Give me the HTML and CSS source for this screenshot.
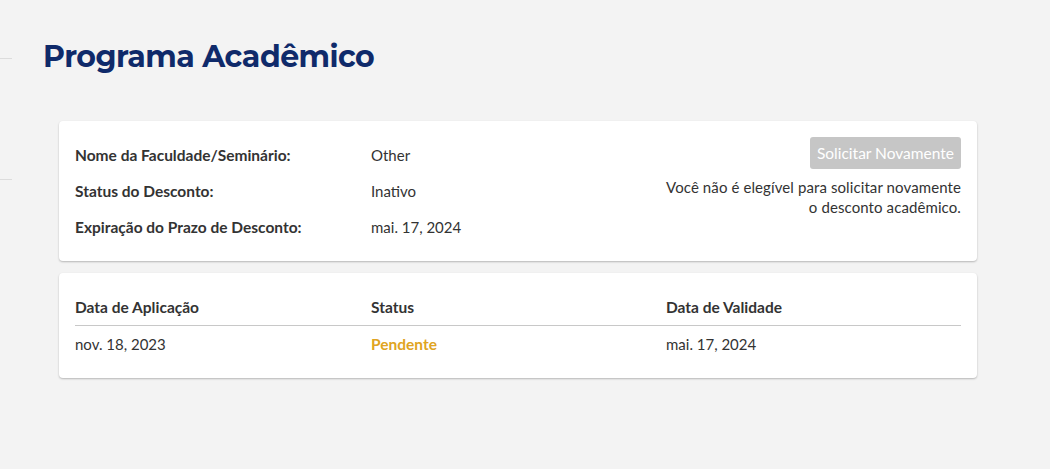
FILE: index.html
```html
<!DOCTYPE html>
<html lang="pt">
<head>
  <meta charset="UTF-8">
  <title>Programa Acadêmico</title>
  <link rel="stylesheet" href="styles.css">
</head>
<body>
  <div class="layout">
    <aside class="sidebar">
      <div class="side-item first"></div>
      <div class="side-item"></div>
    </aside>

    <main class="content">
      <h1 class="page-title">Programa Acadêmico</h1>

      <section class="card summary">
        <div class="details">
          <div class="label">Nome da Faculdade/Seminário:</div>
          <div class="value">Other</div>
          <div class="label">Status do Desconto:</div>
          <div class="value">Inativo</div>
          <div class="label">Expiração do Prazo de Desconto:</div>
          <div class="value">mai. 17, 2024</div>
        </div>
        <div class="actions">
          <button type="button" class="btn-disabled" disabled>Solicitar Novamente</button>
          <p class="note">Você não é elegível para solicitar novamente<br>o desconto acadêmico.</p>
        </div>
      </section>

      <section class="card history">
        <div class="row head">
          <div>Data de Aplicação</div>
          <div>Status</div>
          <div>Data de Validade</div>
        </div>
        <div class="row">
          <div>nov. 18, 2023</div>
          <div class="pending">Pendente</div>
          <div>mai. 17, 2024</div>
        </div>
      </section>
    </main>
  </div>
</body>
</html>
```

FILE: styles.css
```css
body {
  margin: 0;
  background-color: #f3f3f3;
  font-family: "Source Sans Pro", Lato, "Noto Sans", sans-serif;
  font-size: 15px;
  color: #333;
}

.layout {
  display: flex;
  min-height: 469px;
}

.sidebar {
  width: 12px;
  flex-shrink: 0;
}

.side-item {
  height: 120px;
  border-bottom: 1px solid #dcdcdc;
}

.side-item.first {
  height: 58px;
}

.content {
  width: 918px;
  padding-left: 47px;
}

.page-title {
  margin: 38px 0 0 -16px;
  height: 83px;
  font-family: Montserrat, Lato, sans-serif;
  font-size: 30px;
  font-weight: 700;
  line-height: 38px;
  letter-spacing: -0.5px;
  color: #0f2a6a;
}

.card {
  background: #fff;
  border-radius: 4px;
  box-shadow: 0 1px 2px rgba(0, 0, 0, 0.25);
  padding: 16px;
}

.summary {
  display: flex;
  justify-content: space-between;
  margin-bottom: 12px;
}

.details {
  display: grid;
  grid-template-columns: 296px auto;
  grid-auto-rows: 36px;
  align-items: center;
}

.label {
  font-weight: bold;
  font-size: 15.5px;
}

.actions {
  display: flex;
  flex-direction: column;
  align-items: flex-end;
}

.btn-disabled {
  background-color: #c6c6c6;
  color: #fff;
  border: none;
  border-radius: 3px;
  height: 32px;
  padding: 0 7px;
  font-family: inherit;
  font-size: 15.5px;
}

.note {
  margin: 8px 0 0;
  text-align: right;
  line-height: 20px;
  letter-spacing: 0.1px;
}

.row {
  display: grid;
  grid-template-columns: 296px 295px auto;
  height: 36px;
  align-items: center;
}

.row.head {
  font-weight: bold;
  font-size: 15.5px;
  border-bottom: 1px solid #c8c8c8;
}

.pending {
  color: #e0a422;
  font-weight: bold;
  font-size: 15.5px;
}
```
